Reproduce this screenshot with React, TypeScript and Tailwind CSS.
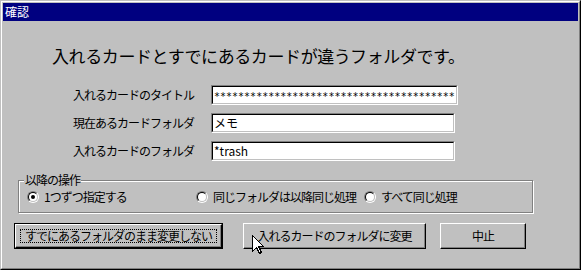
import React from 'react'

const jp = { fontFamily: '"Noto Sans CJK JP", "Noto Sans", sans-serif' }

function Field({ value, wide, mono }: { value: string; wide?: boolean; mono?: boolean }) {
  return (
    <div
      className={`h-[20px] ${wide ? 'w-[247px]' : 'w-[244px]'} border-t border-l border-t-[#808080] border-l-[#808080] border-b border-r border-b-white border-r-white`}
    >
      <div className="h-full w-full bg-white border-t border-l border-t-black border-l-black border-b border-r border-b-[#c0c0c0] border-r-[#c0c0c0] overflow-hidden pl-[1px] flex items-center">
        <span
          className={`whitespace-nowrap text-black ${mono ? 'text-[10px] leading-none pt-[3px]' : 'text-[12px] leading-none'}`}
          style={mono ? { fontFamily: '"DejaVu Sans Mono", monospace' } : jp}
        >
          {value}
        </span>
      </div>
    </div>
  )
}

function Radio({ checked, label, w }: { checked?: boolean; label: string; w: string }) {
  return (
    <div className={`flex items-center gap-[5px] ${w}`}>
      <div className="w-[12px] h-[12px] rounded-full border border-t-[#808080] border-l-[#808080] border-b-white border-r-white">
        <div className="w-full h-full rounded-full bg-white border border-t-black border-l-black border-b-[#c0c0c0] border-r-[#c0c0c0] flex items-center justify-center">
          {checked && <div className="w-[4px] h-[4px] rounded-full bg-black" />}
        </div>
      </div>
      <span className="text-[12px] tracking-[-1px] leading-none text-black whitespace-nowrap">{label}</span>
    </div>
  )
}

function Button({ label, w, isDefault }: { label: string; w: string; isDefault?: boolean }) {
  const raised =
    'h-full w-full border-t border-l border-t-white border-l-white border-b border-r border-b-black border-r-black shadow-[inset_-1px_-1px_0_#808080] flex items-center justify-center'
  return (
    <div className={`h-[26px] ${w} ${isDefault ? 'border border-black' : ''}`}>
      <div className={raised}>
        {isDefault ? (
          <div className="w-[calc(100%-8px)] h-[calc(100%-8px)] border border-dotted border-black flex items-center justify-center">
            <span className="text-[12px] tracking-[-1px] leading-none text-black whitespace-nowrap">{label}</span>
          </div>
        ) : (
          <span className="text-[12px] tracking-[-1px] leading-none text-black whitespace-nowrap">{label}</span>
        )}
      </div>
    </div>
  )
}

export default function App() {
  return (
    <div className="relative w-[581px] h-[270px] bg-[#c0c0c0] border border-t-[#c0c0c0] border-l-[#c0c0c0] border-b-black border-r-black" style={jp}>
      <div className="w-full h-full border border-t-white border-l-white border-b-[#808080] border-r-[#808080] p-[1px] flex flex-col">
        {/* title bar */}
        <div className="h-[18px] bg-[#000080] flex items-center pl-[2px]">
          <span className="text-white text-[12px] leading-none">確認</span>
        </div>

        {/* message */}
        <div className="pl-[49px] mt-[24px] h-[20px] flex items-center">
          <span className="text-[17px] tracking-[-0.4px] leading-none text-black whitespace-nowrap">
            入れるカードとすでにあるカードが違うフォルダです。
          </span>
        </div>

        {/* fields */}
        <div className="pl-[70px] mt-[20px] flex flex-col gap-[8px]">
          <div className="flex items-center h-[20px]">
            <span className="w-[138px] text-[12px] tracking-[-1px] leading-none text-black">入れるカードのタイトル</span>
            <Field value={'*'.repeat(40)} wide mono />
          </div>
          <div className="flex items-center h-[20px]">
            <span className="w-[138px] text-[12px] tracking-[-1px] leading-none text-black">現在あるカードフォルダ</span>
            <Field value="メモ" />
          </div>
          <div className="flex items-center h-[20px]">
            <span className="w-[138px] text-[12px] tracking-[-1px] leading-none text-black">入れるカードのフォルダ</span>
            <Field value="*trash" />
          </div>
        </div>

        {/* group box */}
        <div className="relative ml-[15px] mt-[19px] w-[515px] h-[33px] border border-[#808080] shadow-[inset_1px_1px_0_#fff,1px_1px_0_#fff] flex items-center pl-[8px] pt-[1px]">
          <span className="absolute left-[5px] top-[-8px] bg-[#c0c0c0] px-[1px] text-[12px] tracking-[-1px] leading-[14px] text-black">
            以降の操作
          </span>
          <Radio checked label="1つずつ指定する" w="w-[169px]" />
          <Radio label="同じフォルダは以降同じ処理" w="w-[168px]" />
          <Radio label="すべて同じ処理" w="w-[100px]" />
        </div>

        {/* buttons */}
        <div className="flex items-center mt-[10px] pl-[11px]">
          <Button label="すでにあるフォルダのまま変更しない" w="w-[209px]" isDefault />
          <div className="w-[20px]" />
          <Button label="入れるカードのフォルダに変更" w="w-[183px]" />
          <div className="w-[14px]" />
          <Button label="中止" w="w-[86px]" />
        </div>
      </div>

      {/* mouse pointer */}
      <svg className="absolute left-[251px] top-[234px]" width="13" height="20" viewBox="0 0 13 20">
        <path
          d="M0.5 0.5 L0.5 16.5 L4.5 12.5 L7.5 18.5 L9.5 17.5 L6.5 11.5 L11.5 11.5 Z"
          fill="#fff"
          stroke="#000"
          strokeWidth="1"
          shapeRendering="crispEdges"
        />
      </svg>
    </div>
  )
}
